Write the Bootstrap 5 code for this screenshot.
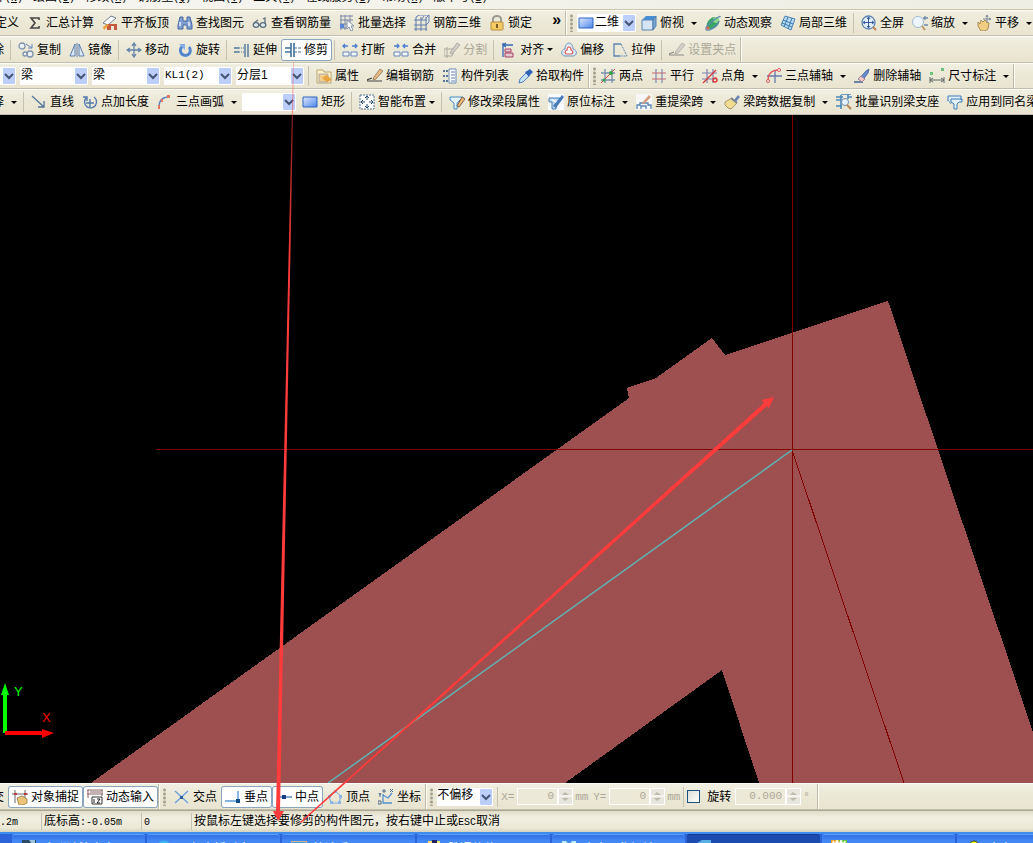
<!DOCTYPE html>
<html lang="zh-CN">
<head>
<meta charset="utf-8">
<meta name="viewport" content="width=device-width, initial-scale=1">
<title>钢筋算量</title>
<link rel="stylesheet" href="https://cdn.jsdelivr.net/npm/bootstrap@5.3.0/dist/css/bootstrap.min.css">
<style>
  :root { --face:#ece9d8; --edge:#c2bfae; }
  body { font:12px/16px "Liberation Sans","Noto Sans CJK SC",sans-serif; color:#000; background:var(--face); }
  .menubar { height:10px; gap:10px; background:linear-gradient(90deg,#f6f5f0,#efeee4); border-bottom:1px solid #c9c7a8; }
  .menubar a { color:#000; text-decoration:none; line-height:16px; margin-bottom:2px; }
  .menubar a:first-child { margin-left:-7px; }
  .menubar i { font:normal 10px/16px "Liberation Mono",monospace; }
  .strip { height:26px; background:linear-gradient(#f1efe2,#ece9d8 40%,#e8e4d0); border-top:1px solid #fbfaf4; border-bottom:1px solid var(--edge); }
  .strip.tall { height:27px; }
  .strip > * { flex:none; }
  .tool { display:inline-flex; align-items:center; gap:3px; height:22px; padding:0 4px; border:0; background:none; color:inherit; font:inherit; white-space:nowrap; }
  .tool svg { width:16px; height:16px; flex:none; }
  .tool.on { background:#fff; box-shadow:inset 0 0 0 1px #8aa5bd; border-radius:3px; }
  .tool:disabled { color:#aca899; }
  .tool:disabled svg { filter:grayscale(1); opacity:.55; }
  .split::after, .drop::after { content:""; border:3px solid transparent; border-top-color:#000; border-bottom:0; width:0; }
  .split::after { margin-left:4px; }
  .cut { margin-left:-12px; }
  .cut-wide { margin-left:-9px; }
  .rule { width:1px; height:20px; background:#c5c2b2; margin:0 3px 0 2px; }
  .grip { width:3px; height:18px; margin:0 4px 0 3px; background:radial-gradient(circle,#a5a28f 1px,transparent 2px) 0 0/3px 4px; }
  .panel-end { width:2px; align-self:stretch; border-left:1px solid #bdbaa8; background:#fffef8; }
  .combo { width:68px; height:18px; margin-right:4px; padding:0 16px 3px 1px; border:0; border-radius:0; appearance:none; color:#000; font:12px/14px "Liberation Sans","Noto Sans CJK SC",sans-serif;
    background:url("data:image/svg+xml,%3Csvg xmlns='http://www.w3.org/2000/svg' width='12' height='16'%3E%3Crect width='12' height='16' rx='1' fill='%23bccefa'/%3E%3Cpath d='M2 6l4 4 4-4' fill='none' stroke='%23445575' stroke-width='2'/%3E%3C/svg%3E") right 1px center no-repeat #fff; }
  .combo.latin { font-family:"Liberation Mono","Noto Sans CJK SC",monospace; font-size:11px; }
  .combo.stub { width:16px; padding:0; }
  .combo.mid { width:56px; margin-right:2px; padding-left:0; }
  .combo.view-mode { width:42px; margin-right:5px; padding-right:14px; }
  .combo.arc { width:54px; margin-left:1px; margin-right:2px; }
  .mode-icon { background:#fff; height:18px; padding:0 0 0 1px; }
  .overflow-mark { font-size:16px; font-weight:bold; margin:0 0 6px 12px; padding:0 4px; }
  .view { min-height:0; background:#000; overflow:hidden; }
  .num { width:41px; height:17px; border:1px solid #fff; background:var(--face); color:#aca899; text-align:right; font:11px/14px "Liberation Mono",monospace; padding:0 3px 2px 0; border-radius:0; }
  .num.deg { width:51px; }
  .spin { width:15px; height:17px; border:1px solid #fff; background:#e8e6dc; }
  .unit { color:#aca899; font:11px/16px "Liberation Mono",monospace; width:16px; padding-left:2px; }
  .unit-x { color:#aca899; font:11px/16px "Liberation Mono",monospace; width:16px; }
  .tick { appearance:none; width:13px; height:13px; margin:0 7px 0 0; border:1px solid #1c5180; background:linear-gradient(135deg,#dcdcd7,#fff); }
  .state { height:22px; border-top:1px solid #aaa795; background:linear-gradient(#e0dcc9,#f0eee0 30%,#ece9d8 80%,#d6d2c0); }
  .state > div { border-left:1px solid #c5c2b2; padding-left:2px; height:17px; white-space:nowrap; }
  .state b { font:10px/16px "Liberation Mono",monospace; }
  .state .c0 { width:41px; border:0; padding:0; }
  .state .c1 { width:100px; }
  .state .c2 { width:50px; }
  .tasks { height:11px; padding-left:12px; gap:2px; background:#2a64d8; border-top:2px solid #3f8cf0; }
  .tasks button { width:133px; height:26px; flex:none; padding:5px 0 0 9px; gap:6px; display:flex; border:0; border-radius:3px 3px 0 0; border-top:1px solid #5fa0ff; color:#fff; font:12px/16px "Noto Sans CJK SC",sans-serif; background:linear-gradient(#2f6fe4,#4488f5 6px,#3b7df0); white-space:nowrap; }
  .tasks button.now { background:#1c4bb0; border-top-color:#123a92; }
  .tasks svg { width:16px; height:16px; }
  .marks { pointer-events:none; }
</style>
</head>
<body class="vh-100 overflow-hidden">
<svg class="position-absolute" width="0" height="0">
  <defs>
    <linearGradient id="blue" x2="1" y2="1"><stop stop-color="#dfeaff"/><stop offset="1" stop-color="#4c84ea"/></linearGradient>
    <symbol id="sum" viewBox="0 0 16 16"><path d="M12 5V3H4l4 5-4 5h8v-2" fill="none" stroke="#444" stroke-width="1.6"/></symbol>
    <symbol id="slab" viewBox="0 0 16 16"><path d="M1 8l8-7 5 2-8 7z" fill="#fff" stroke="#6d7f95"/><path d="M1 13l5-4h9v6h-3v-4H9v4H5v-3z" fill="#c4573f"/><path d="M1 12l4-3 2 1-5 5z" fill="#e9a33a"/></symbol>
    <symbol id="find" viewBox="0 0 16 16"><path d="M3 2h3v4h4V2h3l2 8v4h-5v-4H6v4H1v-4z" fill="#7f9fd0" stroke="#4868a5"/><path d="M3 7v4M12 7v4" stroke="#e8f0ff" stroke-width="1.5"/></symbol>
    <symbol id="glasses" viewBox="0 0 16 16"><g fill="#dfe9ee" stroke="#5d6f7e" stroke-width="1.3"><ellipse cx="4" cy="10" rx="2.8" ry="2.3"/><ellipse cx="11" cy="10" rx="2.8" ry="2.3"/><path d="M7 10h1M2 8l4-3M13 9V3l-2 1" fill="none"/></g></symbol>
    <symbol id="batch" viewBox="0 0 16 16"><path d="M1 1h13M1 5h13M1 9h8M1 13h8M2 0v15M6 0v15M11 0v8" stroke="#7888a8"/><path d="M1 9h4v4H1z" fill="#5b86d8"/><path d="M8 5v9l2-2 2 4 2-1-2-4h3z" fill="#fff" stroke="#8292ac"/></symbol>
    <symbol id="bars" viewBox="0 0 16 16"><path d="M0 5h13M0 10h13M0 14h13M2 2v14M7 2v14M12 2v14M2 2l3-2h10l-3 3M12 10l3-3V0M7 5l3-4" fill="none" stroke="#607cae"/></symbol>
    <symbol id="lock" viewBox="0 0 16 16"><path d="M4 8V4a4 3 0 018 0v4" fill="none" stroke="#999a91" stroke-width="2"/><rect x="2" y="7" width="12" height="8" rx="1" fill="#f4cb66" stroke="#b98c32"/><path d="M8 9v4" stroke="#795d23" stroke-width="2"/></symbol>
    <symbol id="cube" viewBox="0 0 16 16"><path d="M1 5l4-4h10l-3 4z" fill="#488ed4"/><path d="M1 5h11v10H1z" fill="#d5e5f5" stroke="#5a86b3"/><path d="M12 5l3-4v10l-3 4z" fill="#7ca9d2" stroke="#4e7aab"/></symbol>
    <symbol id="orbit" viewBox="0 0 16 16"><ellipse cx="8" cy="8" rx="5" ry="7" transform="rotate(50 8 8)" fill="#36a764"/><circle cx="11" cy="5" r="3" fill="#8dd98d"/><path d="M15 2C17-1 0 10 1 14s12-3 13-8" fill="none" stroke="#5a87ad" stroke-width="1.3"/><circle cx="3" cy="13" r="1.5" fill="#df6241"/></symbol>
    <symbol id="local3d" viewBox="0 0 16 16"><path d="M5 1l10 3-4 11-10-5z" fill="#b9daf0" stroke="#4a83b7"/><path d="M3 5l10 4M2 8l10 4M8 2L4 12M12 3L8 14" stroke="#397bb2"/></symbol>
    <symbol id="full" viewBox="0 0 16 16"><circle cx="7.500" cy="7.500" r="6.500" fill="#e3eefa" stroke="#5d84b4" stroke-width="1.3"/><path d="M7.500 2v11M2 7.500h11M6 4l1.500-2L9 4M6 11l1.500 2L9 11M4 6L2 7.500 4 9M11 6l2 1.500L11 9" fill="none" stroke="#365b9c"/><path d="M12 12l3 3" stroke="#be8455" stroke-width="2"/></symbol>
    <symbol id="zoomer" viewBox="0 0 16 16"><circle cx="6" cy="7" r="5.500" fill="#edf6fd" stroke="#a0b9cf"/><path d="M10 11l3 4" stroke="#bd9b69" stroke-width="2"/><path d="M11 3h5M13 1v4M12 10h4" stroke="#6c8aae" stroke-width="1.3"/></symbol>
    <symbol id="hand" viewBox="0 0 16 16"><path d="M2 7l2 2 1-4 2 2 2-2 2 2 2 1-1 6-3 2H5L2 11z" fill="#f0cd83" stroke="#a98c55"/><path d="M11 0v8M7 4h8M10 2l1-2 1 2M13 3l2 1-2 1" fill="none" stroke="#7a8a99"/></symbol>
    <symbol id="copy" viewBox="0 0 16 16"><g fill="#edf1f3" stroke="#8093ad" stroke-width="1.3"><circle cx="4" cy="4" r="3"/><circle cx="12" cy="12" r="3"/><circle cx="7" cy="12" r="2"/></g><path d="M8 2l6 4M14 2v4h-4" stroke="#6488bd" fill="none"/></symbol>
    <symbol id="mirror" viewBox="0 0 16 16"><path d="M6 2v12H1zM10 2v12h5z" fill="#dce8f4" stroke="#5c7eae"/><path d="M8 1v14" stroke="#5c7eae"/></symbol>
    <symbol id="move" viewBox="0 0 16 16"><path d="M8 2v12M2 8h12M6 4l2-3 2 3M6 12l2 3 2-3M4 6L1 8l3 2M12 6l3 2-3 2" fill="none" stroke="#6483a8" stroke-width="1.3"/></symbol>
    <symbol id="rotate" viewBox="0 0 16 16"><path d="M12 5a5 5 0 11-6-1" fill="none" stroke="#5486cf" stroke-width="3"/><path d="M2 2h6v6z" fill="#86aee4"/></symbol>
    <symbol id="extend" viewBox="0 0 16 16"><path d="M0 6h5M0 10h5M11 2v13M14 2v13" stroke="#4f759e" stroke-width="1.4"/><path d="M5 6h6M5 10h6" stroke="#4f759e" stroke-dasharray="1 1"/></symbol>
    <symbol id="trim" viewBox="0 0 16 16"><path d="M0 6h6M0 10h6M6 1v14M9 1v14" stroke="#41709b" stroke-width="1.6"/><path d="M9 6h7M9 10h7" stroke="#41709b" stroke-dasharray="3 1"/></symbol>
    <symbol id="brk" viewBox="0 0 16 16"><path d="M1 4h5M3 2L1 4l2 2M10 4h5M13 2l2 2-2 2" fill="none" stroke="#4d7fd0" stroke-width="1.4"/><path d="M1 10h6v4H1zM9 10h6v4H9z" fill="#f4f6f8" stroke="#6787bb"/></symbol>
    <symbol id="join" viewBox="0 0 16 16"><path d="M1 4h5M4 2l2 2-2 2M10 4h5M12 2l-2 2 2 2" fill="none" stroke="#4d7fd0" stroke-width="1.4"/><path d="M1 10h6v4H1zM9 10h6v4H9z" fill="#f4f6f8" stroke="#6787bb"/></symbol>
    <symbol id="pen" viewBox="0 0 16 16"><path d="M0 12l5-2M0 13h15" fill="none" stroke="#444" stroke-width="1.2"/><path d="M6 12l1-3 6-8 3 2-7 8z" fill="#e8b77d" stroke="#a08a68"/></symbol>
    <symbol id="cutpen" viewBox="0 0 16 16"><path d="M0 7h11L8 14H0zM3 5v11" fill="none" stroke="#777"/><path d="M6 11l7-10 3 2-8 9z" fill="#bbb" stroke="#777"/></symbol>
    <symbol id="align" viewBox="0 0 16 16"><path d="M2 1v14M2 3h10M5 1L2 3l3 2" stroke="#3568b4" stroke-width="1.3" fill="none"/><path d="M4 7h6v3H4zM4 11h8v4H4z" fill="#e7c9d0" stroke="#a24367"/></symbol>
    <symbol id="offset" viewBox="0 0 16 16"><path d="M4 7c0-8 8-8 8 0 5 1 4 7 0 7H4c-4 0-5-6 0-7z" fill="#dce7f3" stroke="#7196bd"/><path d="M6 8c0-4 4-4 4 0 3 1 2 4 0 4H6c-2 0-3-3 0-4z" fill="#fff" stroke="#d95b57" stroke-width="1.2"/></symbol>
    <symbol id="stretch" viewBox="0 0 16 16"><path d="M9 2l6 12H8" fill="none" stroke="#5f84af" stroke-dasharray="2 1"/><path d="M9 2H2v12h6" fill="none" stroke="#5f84af" stroke-width="1.3"/></symbol>
    <symbol id="props" viewBox="0 0 16 16"><path d="M1 2h6l1 2h7v11H1z" fill="#fff4cf" stroke="#bba56e"/><path d="M3 6h9v8H3z" fill="#f2cd8c" stroke="#aaa"/><path d="M6 10l5-3 5 5-5 2z" fill="#e7a542"/></symbol>
    <symbol id="list" viewBox="0 0 16 16"><path d="M1 3h2M1 8h2M1 13h2M4 3h2M4 8h2M4 13h2" stroke="#59779e" stroke-width="2"/><path d="M7 1h7v14H7z" fill="#fff" stroke="#6d8bb5"/><path d="M9 4h4M9 7h4M9 10h4M9 13h4" stroke="#5f7faf"/></symbol>
    <symbol id="pick" viewBox="0 0 16 16"><path d="M2 15l1-4 6-6 3 3-6 6z" fill="#c7e3fa" stroke="#5080ba"/><path d="M8 4l4 5 1-2 3-3-3-3-3 2z" fill="#2e65b5"/></symbol>
    <symbol id="two" viewBox="0 0 16 16"><path d="M5 1v14M12 1v14M1 5h14M1 12h14" stroke="#7a8fae" stroke-width="1.3"/><path d="M1 15L15 1" stroke="#ce4343"/><circle cx="11" cy="5" r="2" fill="#34a447"/><circle cx="4" cy="12" r="1.500" fill="#34a447"/></symbol>
    <symbol id="para" viewBox="0 0 16 16"><path d="M5 1v14M11 1v14" stroke="#7a8fae" stroke-width="1.2"/><path d="M1 5h14M1 11h14" stroke="#c76773" stroke-width="1.2"/></symbol>
    <symbol id="angle" viewBox="0 0 16 16"><path d="M5 1v14M11 1v14M0 5h15M0 11h15" stroke="#7f83b2" stroke-width="1.2"/><path d="M1 15L14 2" stroke="#dd3838" stroke-width="1.3"/><circle cx="13" cy="12" r="2" fill="none" stroke="#dd3838" stroke-width="1.4"/></symbol>
    <symbol id="arcaxis" viewBox="0 0 16 16"><path d="M1 8h15M9 2v13" stroke="#667cae" stroke-width="1.3"/><path d="M2 13C2 5 6 2 13 2" stroke="#df5353" fill="none" stroke-width="1.3"/><circle cx="2" cy="13" r="1.500" fill="#fff" stroke="#df5353"/><circle cx="13" cy="2" r="1.500" fill="#fff" stroke="#df5353"/></symbol>
    <symbol id="erase" viewBox="0 0 16 16"><path d="M0 14h9" stroke="#6b83a5" stroke-width="2"/><path d="M5 11l7-8 3-2-1 4-6 8z" fill="#5f8fd5" stroke="#526a9d"/><path d="M4 11l3-3 4 3-3 3z" fill="#f4c8ca" stroke="#9a8193"/></symbol>
    <symbol id="dim" viewBox="0 0 16 16"><path d="M1 9v6M15 9v6M1 12h14M4 10l-3 2 3 2M12 10l3 2-3 2" fill="none" stroke="#626b69"/><path d="M1 4h3v3H1zM12 0h3v3h-3z" fill="#6cc181"/></symbol>
    <symbol id="line" viewBox="0 0 16 16"><path d="M1 2l12 11M13 7v6H7" fill="none" stroke="#53759b" stroke-width="1.3"/></symbol>
    <symbol id="length" viewBox="0 0 16 16"><path d="M4 4a6 6 0 108-1M1 3h4v4M8 5v8M4 9h8" fill="none" stroke="#5279ad" stroke-width="1.4"/></symbol>
    <symbol id="arc" viewBox="0 0 16 16"><path d="M2 13C2 6 6 3 12 3" fill="none" stroke="#5f83bb" stroke-width="1.4"/><path d="M1 11h2v4H1zM10 1h3v3h-3zM4 5h2v3H4z" fill="#e57561"/></symbol>
    <symbol id="rect" viewBox="0 0 16 16"><path d="M1 3h14v10H1z" fill="url(#blue)" stroke="#2f64bf"/></symbol>
    <symbol id="smart" viewBox="0 0 16 16"><path d="M1 1h14v14H1z" fill="#fff" stroke="#52739a" stroke-dasharray="2 1"/><path d="M8 3v3M8 10v3M3 8h3M10 8h3M6 4l2-2 2 2M6 12l2 2 2-2M4 6L2 8l2 2M12 6l2 2-2 2" fill="none" stroke="#284d79"/></symbol>
    <symbol id="seg" viewBox="0 0 16 16"><path d="M1 3h13v3h-3l-3 3v6H5V9L1 6z" fill="#e3f1fb" stroke="#4a8cc5"/><path d="M8 12l5-9 3 2-6 8z" fill="#f1b673" stroke="#75634e"/></symbol>
    <symbol id="insitu" viewBox="0 0 16 16"><path d="M0 0h16v16H0z" fill="#f8fbff"/><path d="M1 4h11v4M1 4v4h3v7h4V9" fill="#b9d8f4" stroke="#4b7faf"/><path d="M5 12L14 1l2 2-8 11z" fill="#477bb8"/></symbol>
    <symbol id="respan" viewBox="0 0 16 16"><path d="M0 0h16v16H0z" fill="#f6f7f8"/><path d="M1 15v-4h3v-2h8v2h3v4M5 15v-3h5v3" fill="none" stroke="#5a85b5" stroke-width="1.3"/><path d="M6 9l7-8 2 2-7 7z" fill="#d99b77"/></symbol>
    <symbol id="brush" viewBox="0 0 16 16"><path d="M10 6l4-5 2 2-4 5z" fill="#6e86b5"/><path d="M1 8l7-4 5 5-6 6-3-1-3-3z" fill="#f1dc94" stroke="#aa9a66"/><path d="M7 4l6 5" stroke="#7f8793" stroke-width="2"/></symbol>
    <symbol id="support" viewBox="0 0 16 16"><path d="M0 3h7M0 6h5M0 12h6M5 0h10M5 1v14M12 0v5M12 3h4" stroke="#4b89bc" stroke-width="1.6"/><circle cx="9" cy="8" r="3.500" fill="#e6f1f9" stroke="#708da9"/><path d="M11 11l4 4" stroke="#bb8353" stroke-width="2"/></symbol>
    <symbol id="same" viewBox="0 0 16 16"><path d="M1 7V2h13v4M4 5h11v3h-3l-2 2v5H7v-5L4 8z" fill="#e3f1fb" stroke="#3c7ab8"/><path d="M1 6l3 4" stroke="#5f9acb"/></symbol>
    <symbol id="osnap" viewBox="0 0 16 16"><path d="M0 5h16M3 1v13M13 1v9" stroke="#666"/><path d="M2 4h3v2H2zM12 4h3v2h-3z" fill="#bc3b34"/><path d="M5 9l5-2 5 3v4l-4 2H7z" fill="#ecc579" stroke="#a58754"/></symbol>
    <symbol id="dyn" viewBox="0 0 16 16"><path d="M0 1h16M0 5h16M3 3h11M1 1v8M15 1v6" stroke="#8b6265"/><path d="M5 8h10v7H5z" fill="#fff" stroke="#333"/><path d="M7 10v4M10 10h3l-3 4h3" fill="none" stroke="#222"/></symbol>
    <symbol id="cross" viewBox="0 0 16 16"><path d="M1 2l13 12M14 2L1 14" stroke="#6ba0dd" stroke-width="1.3"/><path d="M6 7h3v3H6z" fill="#315f9d"/></symbol>
    <symbol id="perp" viewBox="0 0 16 16"><path d="M13 2v12M0 12h15" stroke="#5a9bdd" stroke-width="1.4"/><path d="M11 10h4v4h-4z" fill="#134b89"/></symbol>
    <symbol id="middle" viewBox="0 0 16 16"><path d="M1 8h15" stroke="#5285c1" stroke-width="1.4"/><path d="M6 6h4v4H6z" fill="#173f83"/></symbol>
    <symbol id="vertex" viewBox="0 0 16 16"><path d="M8 2l6 5-2 7H4L2 7z" fill="none" stroke="#79a7db"/><path d="M7 1h3v3H7zM1 6h3v3H1zM12 6h3v3h-3zM3 12h3v3H3zM11 12h3v3h-3z" fill="#8cb7e8"/></symbol>
    <symbol id="coord" viewBox="0 0 16 16"><path d="M5 5v9h9M5 6l5 3 4-5" fill="none" stroke="#5491d0" stroke-width="1.3"/><path d="M1 4l1 2v2M3 4L2 6M12 0l3 3M15 0l-3 3M0 12h3v3H0zM5 1h2v2H5z" fill="none" stroke="#4a6888"/></symbol>
    <symbol id="updown" viewBox="0 0 13 15"><path d="M3 6l3-3 4 3zM3 9l3 3 4-3z" fill="#bdbaab"/><path d="M0 7h13" stroke="#fff"/></symbol>
  </defs>
</svg>

<div class="d-flex flex-column h-100 position-relative overflow-hidden">
  <nav class="menubar d-flex align-items-end overflow-hidden text-nowrap flex-shrink-0">
    <a href="#">件<i>(<u>N</u>)</i></a><a href="#">绘图<i>(<u>D</u>)</i></a><a href="#">修改<i>(<u>M</u>)</i></a><a href="#">钢筋量<i>(<u>Q</u>)</i></a><a href="#">视图<i>(<u>V</u>)</i></a><a href="#">工具<i>(<u>T</u>)</i></a><a href="#">在线服务<i>(<u>S</u>)</i></a><a href="#">帮助<i>(<u>H</u>)</i></a><a href="#">版本号<i>(<u>B</u>)</i></a>
  </nav>

  <div class="strip d-flex align-items-center overflow-hidden flex-shrink-0" role="toolbar">
    <button class="tool cut-wide">定义</button>
    <button class="tool"><svg><use href="#sum"/></svg>汇总计算</button>
    <button class="tool"><svg><use href="#slab"/></svg>平齐板顶</button>
    <button class="tool"><svg><use href="#find"/></svg>查找图元</button>
    <button class="tool"><svg><use href="#glasses"/></svg>查看钢筋量</button>
    <button class="tool"><svg><use href="#batch"/></svg>批量选择</button>
    <button class="tool"><svg><use href="#bars"/></svg>钢筋三维</button>
    <button class="tool"><svg><use href="#lock"/></svg>锁定</button>
    <button class="tool overflow-mark">»</button>
    <span class="panel-end"></span><span class="grip"></span>
    <button class="tool mode-icon" aria-label="二维"><svg><use href="#rect"/></svg></button>
    <select class="combo view-mode" aria-label="视图模式"><option>二维</option></select>
    <button class="tool split ps-0"><svg><use href="#cube"/></svg>俯视</button>
    <button class="tool"><svg><use href="#orbit"/></svg>动态观察</button>
    <button class="tool"><svg><use href="#local3d"/></svg>局部三维</button>
    <span class="rule"></span>
    <button class="tool"><svg><use href="#full"/></svg>全屏</button>
    <button class="tool split"><svg><use href="#zoomer"/></svg>缩放</button>
    <button class="tool split"><svg><use href="#hand"/></svg>平移</button>
  </div>

  <div class="strip tall d-flex align-items-center overflow-hidden flex-shrink-0" role="toolbar">
    <button class="tool cut">除</button>
    <span class="rule"></span>
    <button class="tool"><svg><use href="#copy"/></svg>复制</button>
    <button class="tool"><svg><use href="#mirror"/></svg>镜像</button>
    <span class="rule"></span>
    <button class="tool"><svg><use href="#move"/></svg>移动</button>
    <button class="tool"><svg><use href="#rotate"/></svg>旋转</button>
    <span class="rule"></span>
    <button class="tool"><svg><use href="#extend"/></svg>延伸</button>
    <button class="tool on"><svg><use href="#trim"/></svg>修剪</button>
    <span class="rule"></span>
    <button class="tool"><svg><use href="#brk"/></svg>打断</button>
    <button class="tool"><svg><use href="#join"/></svg>合并</button>
    <button class="tool" disabled><svg><use href="#cutpen"/></svg>分割</button>
    <span class="rule"></span>
    <button class="tool drop"><svg><use href="#align"/></svg>对齐</button>
    <button class="tool"><svg><use href="#offset"/></svg>偏移</button>
    <button class="tool"><svg><use href="#stretch"/></svg>拉伸</button>
    <span class="rule"></span>
    <button class="tool" disabled><svg><use href="#pen"/></svg>设置夹点</button>
    <span class="panel-end"></span>
  </div>

  <div class="strip d-flex align-items-center overflow-hidden flex-shrink-0" role="toolbar">
    <select class="combo stub" aria-label="楼层"><option></option></select>
    <select class="combo" aria-label="构件类型"><option>梁</option></select>
    <select class="combo" aria-label="构件分类"><option>梁</option></select>
    <select class="combo latin" aria-label="构件"><option>KL1(2)</option></select>
    <select class="combo" aria-label="分层"><option>分层1</option></select>
    <span class="rule ms-0"></span>
    <button class="tool"><svg><use href="#props"/></svg>属性</button>
    <button class="tool"><svg><use href="#pen"/></svg>编辑钢筋</button>
    <button class="tool"><svg><use href="#list"/></svg>构件列表</button>
    <button class="tool"><svg><use href="#pick"/></svg>拾取构件</button>
    <span class="panel-end"></span><span class="grip me-1"></span>
    <button class="tool ps-0"><svg><use href="#two"/></svg>两点</button>
    <button class="tool"><svg><use href="#para"/></svg>平行</button>
    <button class="tool split"><svg><use href="#angle"/></svg>点角</button>
    <button class="tool split"><svg><use href="#arcaxis"/></svg>三点辅轴</button>
    <button class="tool"><svg><use href="#erase"/></svg>删除辅轴</button>
    <button class="tool split"><svg><use href="#dim"/></svg>尺寸标注</button>
    <span class="panel-end"></span>
  </div>

  <div class="strip d-flex align-items-center overflow-hidden flex-shrink-0" role="toolbar">
    <button class="tool split cut">择</button>
    <span class="rule"></span>
    <button class="tool"><svg><use href="#line"/></svg>直线</button>
    <button class="tool"><svg><use href="#length"/></svg>点加长度</button>
    <button class="tool split"><svg><use href="#arc"/></svg>三点画弧</button>
    <select class="combo arc" aria-label="画弧参数"><option></option></select>
    <button class="tool"><svg><use href="#rect"/></svg>矩形</button>
    <span class="rule"></span>
    <button class="tool drop"><svg><use href="#smart"/></svg>智能布置</button>
    <span class="rule"></span>
    <button class="tool"><svg><use href="#seg"/></svg>修改梁段属性</button>
    <button class="tool split"><svg><use href="#insitu"/></svg>原位标注</button>
    <button class="tool split"><svg><use href="#respan"/></svg>重提梁跨</button>
    <button class="tool split"><svg><use href="#brush"/></svg>梁跨数据复制</button>
    <button class="tool"><svg><use href="#support"/></svg>批量识别梁支座</button>
    <button class="tool"><svg><use href="#same"/></svg>应用到同名梁</button>
  </div>

  <main class="view flex-grow-1">
    <svg class="d-block w-100 h-100" viewBox="0 115 1033 668" preserveAspectRatio="xMidYMid slice">
      <path d="M91 783L629 398 627 388 656 378 712 338 725 355 888 301 1034 735V783H759L722 670 565 783z" fill="#9e4f4f" shape-rendering="crispEdges"/>
      <g fill="none" stroke="#800000" shape-rendering="crispEdges"><path d="M792.500 115V783M156 449.500H1033"/><path d="M792 450L904 783"/></g>
      <path d="M792 450L328 783" stroke="#5fb4b4" stroke-width="1.500"/>
      <path d="M3 733V695H1L5 683 9 695H7V733z" fill="#0f0"/>
      <path d="M5 731H42V729L54 733 42 738V735H5z" fill="red"/>
      <g font-family="Liberation Sans,sans-serif" font-size="13"><text x="14" y="696" fill="#0f0">Y</text><text x="42" y="722" fill="red">X</text></g>
    </svg>
  </main>

  <div class="strip tall d-flex align-items-center overflow-hidden flex-shrink-0" role="toolbar">
    <button class="tool cut">交</button>
    <button class="tool on"><svg><use href="#osnap"/></svg>对象捕捉</button>
    <button class="tool on"><svg><use href="#dyn"/></svg>动态输入</button>
    <span class="panel-end"></span><span class="grip"></span>
    <button class="tool"><svg><use href="#cross"/></svg>交点</button>
    <button class="tool on"><svg><use href="#perp"/></svg>垂点</button>
    <button class="tool on"><svg><use href="#middle"/></svg>中点</button>
    <button class="tool"><svg><use href="#vertex"/></svg>顶点</button>
    <button class="tool"><svg><use href="#coord"/></svg>坐标</button>
    <span class="panel-end"></span><span class="grip"></span>
    <select class="combo mid" aria-label="偏移方式"><option>不偏移</option></select>
    <span class="rule"></span>
    <label class="unit-x" for="ox">X=</label><input class="num" id="ox" value="0" disabled><svg class="spin"><use href="#updown"/></svg><span class="unit me-1">mm</span>
    <label class="unit-x" for="oy">Y=</label><input class="num" id="oy" value="0" disabled><svg class="spin"><use href="#updown"/></svg><span class="unit">mm</span>
    <span class="rule"></span>
    <input class="tick" type="checkbox" id="rot"><label for="rot" class="me-1">旋转</label>
    <input class="num deg" value="0.000" aria-label="旋转角度" disabled><svg class="spin"><use href="#updown"/></svg><span class="unit">°</span>
    <span class="panel-end"></span>
  </div>

  <footer class="state d-flex align-items-center overflow-hidden flex-shrink-0">
    <div class="c0"><b>.2m</b></div><div class="c1">底标高<b>:-0.05m</b></div><div class="c2"><b>0</b></div><div>按鼠标左键选择要修剪的构件图元，按右键中止或<b>ESC</b>取消</div>
  </footer>

  <div class="tasks d-flex overflow-hidden flex-shrink-0">
    <button><svg viewBox="0 0 16 16"><path d="M1 0h14v16H1z" fill="#284a67"/><path d="M8 0h6v8z" fill="#9cc3dd"/></svg>广联达演之家</button>
    <button><svg viewBox="0 0 16 16"><circle cx="8" cy="8" r="6" fill="none" stroke="#36b7f2" stroke-width="3"/></svg>西部直播时人</button>
    <button><svg viewBox="0 0 16 16"><path d="M0 1h16v12H0z" fill="#c9b68b"/><path d="M1 2h14v10H1z" fill="#4c9ae0"/></svg>快速看图</button>
    <button><svg viewBox="0 0 16 16"><path d="M2 1h12v12H2z" fill="#f5e36a"/><path d="M6 0h5v4H6z" fill="#222266"/></svg>胜通软件</button>
    <button><svg viewBox="0 0 16 16"><path d="M1 1h4l3 4 3-4h4v14H1z" fill="#bfe8ff"/></svg>点点图集阅读</button>
    <button class="now" aria-label="当前窗口"><svg viewBox="0 0 16 16"><path d="M1 3l5-3h9v14H1z" fill="#58b0e4"/></svg></button>
    <button aria-label="窗口"><svg viewBox="0 0 16 16"><path d="M0 0h8v16H0z" fill="#f0a21e"/><path d="M8 0h8v16H8z" fill="#5fc832"/><path d="M2 1l2 5 2-5 2 5 2-5 2 5 2-5" fill="none" stroke="#fff" stroke-width="2"/></svg></button>
    <button><svg viewBox="0 0 16 16"><circle cx="8" cy="6" r="5" fill="#ff0" stroke="#333"/></svg>大家</button>
  </div>

  <svg class="marks position-absolute top-0 start-0 w-100 h-100" viewBox="0 0 1033 843" preserveAspectRatio="none">
    <defs><linearGradient id="fade" gradientUnits="userSpaceOnUse" x1="0" y1="62" x2="0" y2="260"><stop stop-color="#ff3b3b" stop-opacity=".3"/><stop offset="1" stop-color="#ff3b3b"/></linearGradient></defs>
    <path d="M293 62h1L280 811H284L278 821 273 811H276z" fill="url(#fade)"/>
    <path d="M301 823L300 822 764 403 762 400 774 397 769 408 767 406z" fill="#ff3b3b"/>
  </svg>
</div>
<script src="https://cdn.jsdelivr.net/npm/bootstrap@5.3.0/dist/js/bootstrap.bundle.min.js"></script>
</body>
</html>
